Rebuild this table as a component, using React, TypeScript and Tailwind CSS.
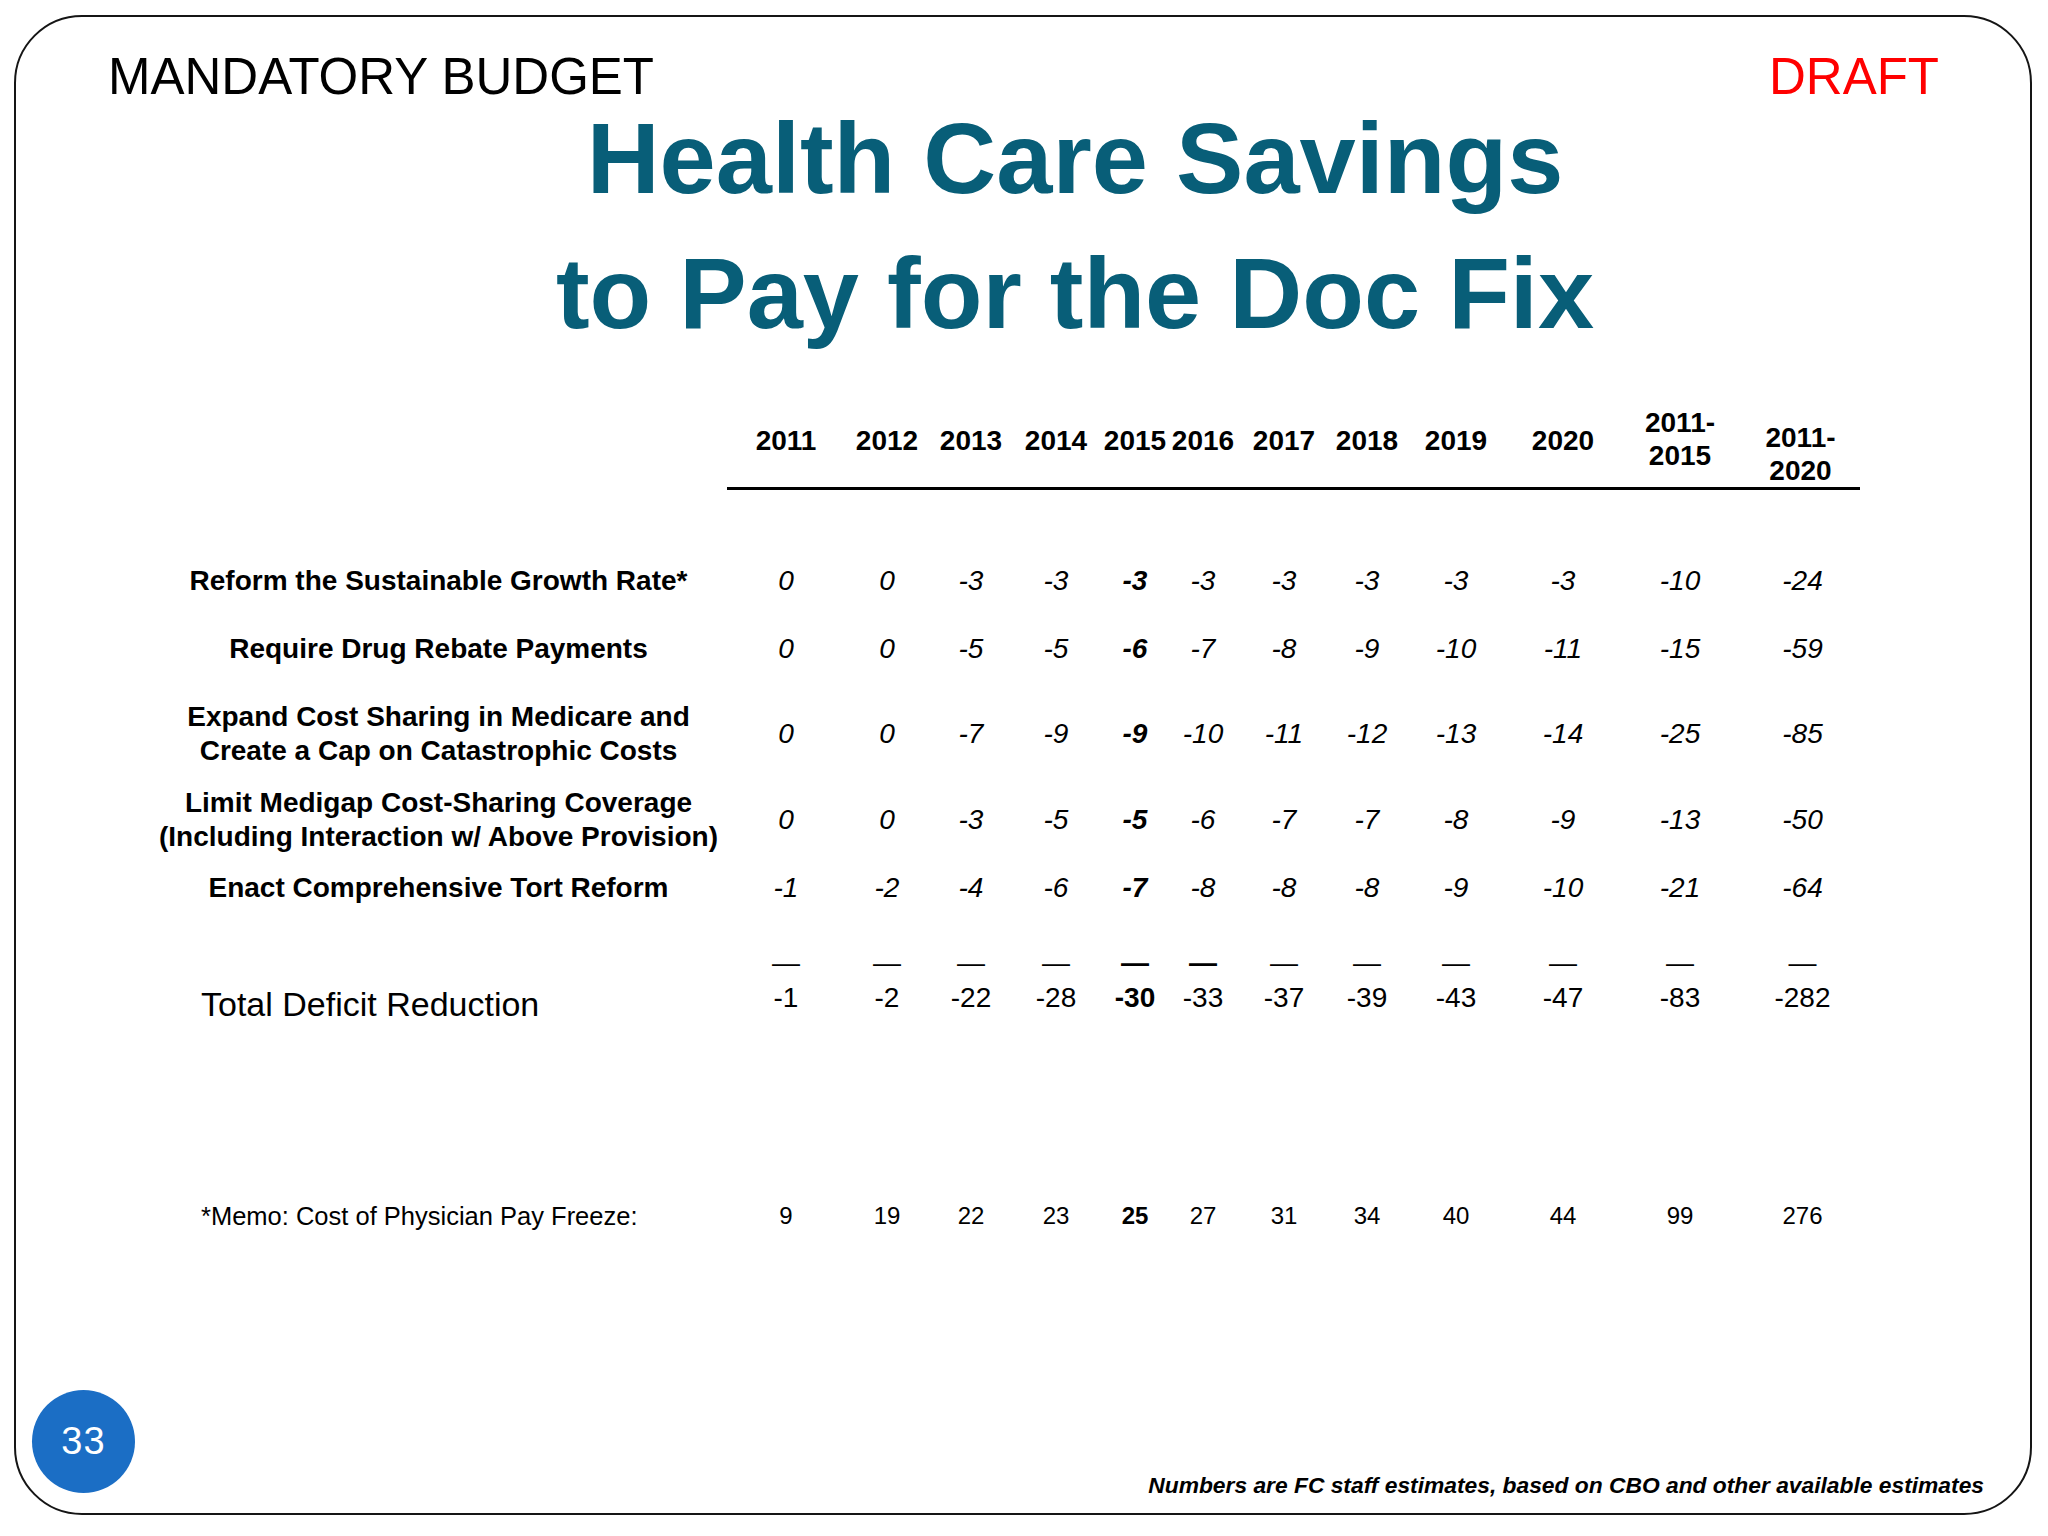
const cols =
  "grid grid-cols-[118px_84px_84px_86px_72px_64px_98px_68px_110px_104px_130px_115px] w-[1133px]";

const years = ["2011", "2012", "2013", "2014", "2015", "2016", "2017", "2018", "2019", "2020"];

const rows: { label: string[]; h: string; values: number[] }[] = [
  {
    label: ["Reform the Sustainable Growth Rate*"],
    h: "h-[68px]",
    values: [0, 0, -3, -3, -3, -3, -3, -3, -3, -3, -10, -24],
  },
  {
    label: ["Require Drug Rebate Payments"],
    h: "h-[68px]",
    values: [0, 0, -5, -5, -6, -7, -8, -9, -10, -11, -15, -59],
  },
  {
    label: ["Expand Cost Sharing in Medicare and", "Create a Cap on Catastrophic Costs"],
    h: "h-[102px]",
    values: [0, 0, -7, -9, -9, -10, -11, -12, -13, -14, -25, -85],
  },
  {
    label: ["Limit Medigap Cost-Sharing Coverage", "(Including Interaction w/ Above Provision)"],
    h: "h-[70px]",
    values: [0, 0, -3, -5, -5, -6, -7, -7, -8, -9, -13, -50],
  },
  {
    label: ["Enact Comprehensive Tort Reform"],
    h: "h-[66px]",
    values: [-1, -2, -4, -6, -7, -8, -8, -8, -9, -10, -21, -64],
  },
];

const totals = [-1, -2, -22, -28, -30, -33, -37, -39, -43, -47, -83, -282];
const memo = [9, 19, 22, 23, 25, 27, 31, 34, 40, 44, 99, 276];

export default function App() {
  return (
    <div className="w-[2048px] h-[1536px] bg-white pl-[14px] pt-[15px] font-['Liberation_Sans',Arial,sans-serif] text-black">
      <div className="w-[2018px] h-[1500px] border-2 border-[#151515] rounded-[68px] flex flex-col">
        {/* top bar */}
        <div className="mt-[40px] flex justify-between pl-[92px] pr-[91px] text-[51px] leading-[40px]">
          <span>MANDATORY BUDGET</span>
          <span className="text-[#ff0000]">DRAFT</span>
        </div>

        {/* title */}
        <h1 className="-mt-[6px] pl-[104px] text-center text-[101px] leading-[135px] font-bold text-[#085e78]">
          Health Care Savings
          <br />
          to Pay for the Doc Fix
        </h1>

        {/* table */}
        <div className="ml-[134px] mt-[45px] flex flex-col">
          <div className="flex">
            <div className="w-[577px]" />
            <div className={`${cols} h-[84px] border-b-[3px] border-black font-bold text-[28px] leading-[33px]`}>
              {years.map((y) => (
                <div key={y} className="text-center pt-[18px]">
                  {y}
                </div>
              ))}
              <div className="text-center">
                2011-
                <br />
                2015
              </div>
              <div className="text-center self-end pr-[4px]">
                2011-
                <br />
                2020
              </div>
            </div>
          </div>

          <div className="mt-[57px] flex flex-col">
            {rows.map((r) => (
              <div key={r.label[0]} className={`flex items-center ${r.h}`}>
                <div className="w-[577px] text-center font-bold text-[28px] leading-[34px]">
                  {r.label.map((l) => (
                    <div key={l}>{l}</div>
                  ))}
                </div>
                <div className={`${cols} italic text-[28px] leading-[32px]`}>
                  {r.values.map((v, i) => (
                    <div key={i} className={i === 4 ? "text-center font-bold" : "text-center"}>
                      {v}
                    </div>
                  ))}
                </div>
              </div>
            ))}
          </div>

          {/* dashes */}
          <div className="mt-[26px] flex h-[32px]">
            <div className="w-[577px]" />
            <div className={`${cols} text-[28px] leading-[32px]`}>
              {totals.map((_, i) => (
                <div key={i} className={i === 4 || i === 5 ? "text-center font-bold" : "text-center"}>
                  —
                </div>
              ))}
            </div>
          </div>

          {/* total */}
          <div className="mt-[3px] flex items-start">
            <div className="w-[577px] pl-[51px] mt-[2px] text-[34px] leading-[40px]">Total Deficit Reduction</div>
            <div className={`${cols} text-[28px] leading-[32px]`}>
              {totals.map((v, i) => (
                <div key={i} className={i === 4 ? "text-center font-bold" : "text-center"}>
                  {v}
                </div>
              ))}
            </div>
          </div>

          {/* memo */}
          <div className="mt-[177px] flex items-center h-[30px]">
            <div className="w-[577px] pl-[51px] text-[25.5px] leading-[30px]">*Memo: Cost of Physician Pay Freeze:</div>
            <div className={`${cols} text-[24px] leading-[30px]`}>
              {memo.map((v, i) => (
                <div key={i} className={i === 4 ? "text-center font-bold" : "text-center"}>
                  {v}
                </div>
              ))}
            </div>
          </div>
        </div>

        {/* footer */}
        <div className="mt-auto flex items-end justify-between pb-[14px] pl-[16px] pr-[46px]">
          <div className="mb-[6px] w-[103px] h-[103px] rounded-full bg-[#1b6ec5] flex items-center justify-center text-white text-[38px] tracking-[1px]">
            33
          </div>
          <div className="italic font-bold text-[22.8px] leading-[28px]">
            Numbers are FC staff estimates, based on CBO and other available estimates
          </div>
        </div>
      </div>
    </div>
  );
}
